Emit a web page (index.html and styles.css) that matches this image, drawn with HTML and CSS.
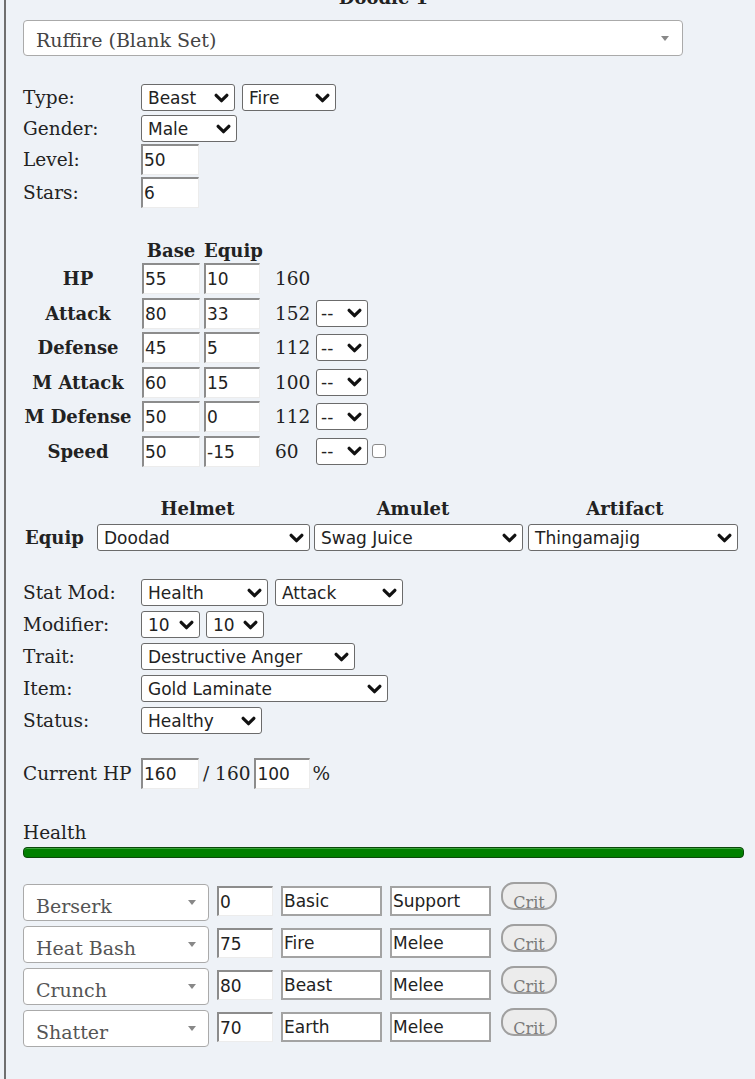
FILE: index.html
```html
<!DOCTYPE html>
<html>
<head>
<meta charset="utf-8">
<link rel="stylesheet" href="styles.css">
</head>
<body>
<div class="panel">
  <div class="title">Doodle 1</div>
  <div class="bigsel"><span class="bstext">Ruffire (Blank Set)</span><span class="tri"></span></div>

  <div class="basics">
    <div class="row gap4">
      <span class="lbl">Type:</span>
      <span class="sel w94">Beast<svg class="chev" viewBox="0 0 14 9"><path d="M2 2l5 5 5-5"/></svg></span>
      <span class="sel w94 ml7">Fire<svg class="chev" viewBox="0 0 14 9"><path d="M2 2l5 5 5-5"/></svg></span>
    </div>
    <div class="row gap2">
      <span class="lbl">Gender:</span>
      <span class="sel w96">Male<svg class="chev" viewBox="0 0 14 9"><path d="M2 2l5 5 5-5"/></svg></span>
    </div>
    <div class="row gap2">
      <span class="lbl">Level:</span>
      <span class="inp">50</span>
    </div>
    <div class="row">
      <span class="lbl">Stars:</span>
      <span class="inp">6</span>
    </div>
  </div>

  <div class="stats">
    <div class="srow head">
      <span class="slbl"></span>
      <span class="hcell wb">Base</span>
      <span class="hcell we">Equip</span>
    </div>
    <div class="srow">
      <span class="slbl">HP</span>
      <span class="inp">55</span>
      <span class="inp we ml4">10</span>
      <span class="num">160</span>
    </div>
    <div class="srow">
      <span class="slbl">Attack</span>
      <span class="inp">80</span>
      <span class="inp we ml4">33</span>
      <span class="num">152</span>
      <span class="sel w52">--<svg class="chev" viewBox="0 0 14 9"><path d="M2 2l5 5 5-5"/></svg></span>
    </div>
    <div class="srow">
      <span class="slbl">Defense</span>
      <span class="inp">45</span>
      <span class="inp we ml4">5</span>
      <span class="num">112</span>
      <span class="sel w52">--<svg class="chev" viewBox="0 0 14 9"><path d="M2 2l5 5 5-5"/></svg></span>
    </div>
    <div class="srow">
      <span class="slbl">M Attack</span>
      <span class="inp">60</span>
      <span class="inp we ml4">15</span>
      <span class="num">100</span>
      <span class="sel w52">--<svg class="chev" viewBox="0 0 14 9"><path d="M2 2l5 5 5-5"/></svg></span>
    </div>
    <div class="srow">
      <span class="slbl">M Defense</span>
      <span class="inp">50</span>
      <span class="inp we ml4">0</span>
      <span class="num">112</span>
      <span class="sel w52">--<svg class="chev" viewBox="0 0 14 9"><path d="M2 2l5 5 5-5"/></svg></span>
    </div>
    <div class="srow">
      <span class="slbl">Speed</span>
      <span class="inp">50</span>
      <span class="inp we ml4">-15</span>
      <span class="num">60</span>
      <span class="sel w52">--<svg class="chev" viewBox="0 0 14 9"><path d="M2 2l5 5 5-5"/></svg></span>
      <span class="check"></span>
    </div>
  </div>

  <div class="equip">
    <span></span>
    <span class="eh">Helmet</span>
    <span class="eh">Amulet</span>
    <span class="eh">Artifact</span>
    <span class="elbl">Equip</span>
    <span class="sel e1">Doodad<svg class="chev" viewBox="0 0 14 9"><path d="M2 2l5 5 5-5"/></svg></span>
    <span class="sel e2">Swag Juice<svg class="chev" viewBox="0 0 14 9"><path d="M2 2l5 5 5-5"/></svg></span>
    <span class="sel e3">Thingamajig<svg class="chev" viewBox="0 0 14 9"><path d="M2 2l5 5 5-5"/></svg></span>
  </div>

  <div class="mods">
    <div class="row gap5">
      <span class="lbl">Stat Mod:</span>
      <span class="sel w127">Health<svg class="chev" viewBox="0 0 14 9"><path d="M2 2l5 5 5-5"/></svg></span>
      <span class="sel w128 ml7">Attack<svg class="chev" viewBox="0 0 14 9"><path d="M2 2l5 5 5-5"/></svg></span>
    </div>
    <div class="row gap5">
      <span class="lbl">Modifier:</span>
      <span class="sel w59">10<svg class="chev" viewBox="0 0 14 9"><path d="M2 2l5 5 5-5"/></svg></span>
      <span class="sel w58 ml6">10<svg class="chev" viewBox="0 0 14 9"><path d="M2 2l5 5 5-5"/></svg></span>
    </div>
    <div class="row gap5">
      <span class="lbl">Trait:</span>
      <span class="sel w214">Destructive Anger<svg class="chev" viewBox="0 0 14 9"><path d="M2 2l5 5 5-5"/></svg></span>
    </div>
    <div class="row gap5">
      <span class="lbl">Item:</span>
      <span class="sel w247">Gold Laminate<svg class="chev" viewBox="0 0 14 9"><path d="M2 2l5 5 5-5"/></svg></span>
    </div>
    <div class="row">
      <span class="lbl">Status:</span>
      <span class="sel w121">Healthy<svg class="chev" viewBox="0 0 14 9"><path d="M2 2l5 5 5-5"/></svg></span>
    </div>
  </div>

  <div class="row curhp">
    <span class="lbl">Current HP</span>
    <span class="inp">160</span>
    <span class="slash">/ 160</span>
    <span class="inp we">100</span>
    <span class="pct">%</span>
  </div>

  <div class="hlabel">Health</div>
  <div class="bar"></div>

  <div class="moves">
    <div class="mrow">
      <span class="msel"><span class="mtext">Berserk</span><span class="tri"></span></span>
      <span class="inp mnum">0</span>
      <span class="box">Basic</span>
      <span class="box">Support</span>
      <span class="crit">Crit</span>
    </div>
    <div class="mrow">
      <span class="msel"><span class="mtext">Heat Bash</span><span class="tri"></span></span>
      <span class="inp mnum">75</span>
      <span class="box">Fire</span>
      <span class="box">Melee</span>
      <span class="crit">Crit</span>
    </div>
    <div class="mrow">
      <span class="msel"><span class="mtext">Crunch</span><span class="tri"></span></span>
      <span class="inp mnum">80</span>
      <span class="box">Beast</span>
      <span class="box">Melee</span>
      <span class="crit">Crit</span>
    </div>
    <div class="mrow">
      <span class="msel"><span class="mtext">Shatter</span><span class="tri"></span></span>
      <span class="inp mnum">70</span>
      <span class="box">Earth</span>
      <span class="box">Melee</span>
      <span class="crit">Crit</span>
    </div>
  </div>
</div>
</body>
</html>
```

FILE: styles.css
```css
html, body {
  margin: 0;
  padding: 0;
  background: #eef2f7;
  overflow: hidden;
}
body {
  font-family: "DejaVu Serif", serif;
  font-size: 18.5px;
  color: #222;
}
.panel {
  margin-left: 4px;
  border-left: 2px solid #6f6f6f;
  padding: 0 11px 0 17px;
  min-height: 1120px;
  box-sizing: border-box;
}
.title {
  margin-top: -15px;
  height: 25px;
  line-height: 25px;
  text-align: center;
  font-weight: bold;
  font-size: 18px;
}
.bigsel, .msel {
  display: flex;
  align-items: center;
  justify-content: space-between;
  box-sizing: border-box;
  background: #fff;
  border: 1px solid #aaa;
  border-radius: 4px;
  color: #444;
  font-size: 19px;
  padding: 0 13px 0 12px;
}
.bigsel {
  margin-top: 10px;
  width: 660px;
  height: 36px;
}
.bstext { padding-top: 3px; }
.tri {
  width: 0;
  height: 0;
  border-left: 4px solid transparent;
  border-right: 4px solid transparent;
  border-top: 5px solid #888;
}
.row {
  display: flex;
  align-items: center;
}
.gap2 { margin-bottom: 2px; }
.gap4 { margin-bottom: 4px; }
.gap5 { margin-bottom: 5px; }
.basics { margin-top: 28px; }
.lbl {
  width: 118px;
  flex: none;
}
.sel {
  display: inline-flex;
  align-items: center;
  justify-content: space-between;
  box-sizing: border-box;
  height: 27px;
  border: 1px solid #6b6b6b;
  border-radius: 3px;
  background: #fff;
  font-family: "DejaVu Sans", sans-serif;
  font-size: 17px;
  color: #222;
  padding: 0 5px 0 6px;
  flex: none;
  white-space: nowrap;
}
.chev {
  width: 15px;
  height: 10px;
  flex: none;
}
.chev path {
  fill: none;
  stroke: #111;
  stroke-width: 3;
  stroke-linecap: round;
  stroke-linejoin: round;
}
.w52 { width: 52px; padding-left: 4px; }
.w58 { width: 58px; }
.w59 { width: 59px; }
.w94 { width: 94px; }
.w96 { width: 96px; }
.w121 { width: 121px; }
.w127 { width: 127px; }
.w128 { width: 128px; }
.w214 { width: 214px; }
.w247 { width: 247px; }
.ml4 { margin-left: 4px; }
.ml6 { margin-left: 6px; }
.ml7 { margin-left: 7px; }
.inp {
  display: inline-flex;
  align-items: center;
  box-sizing: border-box;
  width: 58px;
  height: 31px;
  background: #fff;
  border-style: solid;
  border-width: 2px 1px 1px 2px;
  border-color: #8c8c8c #ececec #ececec #8c8c8c;
  font-family: "DejaVu Sans", sans-serif;
  font-size: 17px;
  color: #222;
  padding: 0 1px;
  flex: none;
}
.inp.we { width: 56px; }

/* stats */
.stats { margin-top: 29px; }
.srow {
  display: flex;
  align-items: center;
  height: 31px;
  margin-bottom: 3.5px;
}
.srow.head {
  height: 26px;
  margin-bottom: 0;
}
.slbl {
  width: 110px;
  margin-right: 9px;
  text-align: center;
  font-weight: bold;
  font-size: 18px;
  flex: none;
}
.hcell {
  font-weight: bold;
  font-size: 18px;
  text-align: center;
  flex: none;
}
.hcell.wb { width: 58px; }
.hcell.we { width: 56px; margin-left: 4px; }
.num {
  width: 41px;
  padding-left: 15px;
  flex: none;
}
.check {
  width: 14px;
  height: 14px;
  box-sizing: border-box;
  border: 1px solid #8a8a8a;
  border-radius: 3px;
  background: #fff;
  margin-left: 4px;
}

/* equip */
.equip {
  margin-top: 29.5px;
  display: grid;
  grid-template-columns: 74px 217px 214px 210px;
  align-items: center;
}
.eh {
  text-align: center;
  font-weight: bold;
  font-size: 18px;
  line-height: 25px;
  height: 28px;
  padding-right: 16px;
}
.elbl {
  font-weight: bold;
  font-size: 18px;
  padding-left: 2px;
}
.e1 { width: 213px; }
.e2 { width: 209px; }
.e3 { width: 210px; }

/* mods */
.mods { margin-top: 28px; }
.curhp { margin-top: 24px; }
.slash { margin: 0 4px; }
.pct { margin-left: 2px; }

.hlabel {
  margin-top: 31px;
  height: 25px;
  line-height: 25px;
}
.bar {
  margin-top: 2px;
  width: 721px;
  height: 11px;
  box-sizing: border-box;
  background: #008000;
  border: 1px solid #0a4a0a;
  border-radius: 4px;
  box-shadow: inset 0 1px 0 #3da33d;
}

/* moves */
.moves { margin-top: 24px; }
.mrow {
  display: flex;
  align-items: flex-start;
  height: 42px;
}
.msel {
  width: 186px;
  height: 37px;
  margin-top: 2px;
  padding: 0 12px 0 12px;
  color: #555;
  flex: none;
}
.mtext { padding-top: 6px; }
.mnum {
  width: 56px;
  height: 30px;
  margin: 4px 0 0 8px;
}
.box {
  display: inline-flex;
  align-items: center;
  box-sizing: border-box;
  width: 101px;
  height: 30px;
  margin: 4px 0 0 8px;
  background: #fff;
  border: 2px solid #a3a3a3;
  font-family: "DejaVu Sans", sans-serif;
  font-size: 17px;
  color: #222;
  padding: 0 1px;
  flex: none;
}
.crit {
  display: inline-flex;
  align-items: flex-start;
  justify-content: center;
  box-sizing: border-box;
  width: 56px;
  height: 28px;
  margin-left: 10px;
  border: 2px solid #a0a0a0;
  border-radius: 13px;
  background: #ececec;
  color: #7a7a7a;
  font-size: 16px;
  line-height: 20px;
  padding-top: 9px;
  overflow: visible;
  flex: none;
}
```
